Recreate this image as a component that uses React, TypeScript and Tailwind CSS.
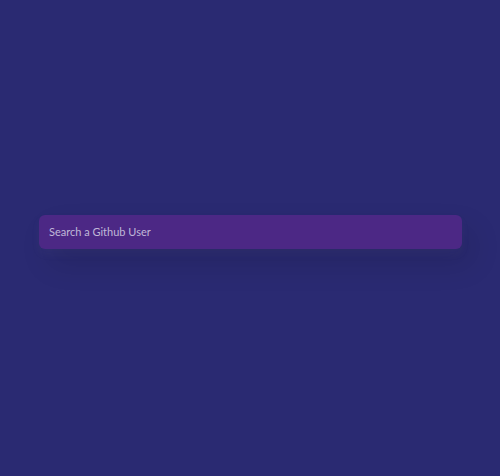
export default function App() {
  return (
    <div className="flex h-[476px] w-full items-center justify-center bg-[#2a2a72] pl-[39px] pr-[38px] font-['Lato','Noto_Sans',sans-serif]">
      <form className="mb-[13px] w-full" onSubmit={(e) => e.preventDefault()}>
        <input
          type="text"
          placeholder="Search a Github User"
          className="block h-[34px] w-full rounded-[6px] border-none bg-[#4c2885] px-[10px] text-[11px] text-white shadow-[0_5px_10px_rgba(154,160,185,0.05),10px_15px_30px_rgba(0,0,0,0.12)] outline-none placeholder:text-[#c0b8d8]"
        />
      </form>
    </div>
  )
}
